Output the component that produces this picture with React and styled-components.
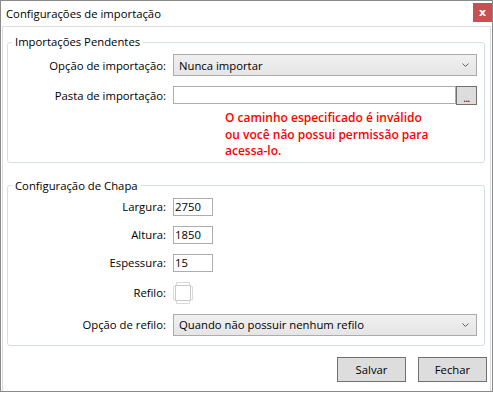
import React from "react";
import styled, { createGlobalStyle } from "styled-components";

const GlobalStyle = createGlobalStyle`
  html, body { margin: 0; padding: 0; background: #fff; }
  body {
    font-family: "Open Sans", "Noto Sans", "Liberation Sans", sans-serif;
    font-size: 11.3px;
    color: #000;
  }
  * { box-sizing: border-box; }
`;

const Window = styled.div`
  width: 493px;
  height: 392px;
  border: 1px solid #8a8a8a;
  display: flex;
  flex-direction: column;
  background: #fff;
`;

const TitleBar = styled.div`
  height: 25px;
  display: flex;
  align-items: flex-start;
  padding-left: 5px;
`;

const Title = styled.span`
  line-height: 25px;
`;

const CloseButton = styled.div`
  margin-left: auto;
  margin-top: 2px;
  width: 19px;
  height: 19px;
  background: #c75050;
  color: #fff;
  font-weight: bold;
  font-size: 11px;
  font-family: "DejaVu Sans", sans-serif;
  display: flex;
  align-items: center;
  justify-content: center;
  line-height: 1;
`;

const Body = styled.div`
  flex: 1;
  margin: 0 1px;
  border: 1px solid #dcdcdc;
  border-bottom: none;
  display: flex;
  flex-direction: column;
  padding: 7px 5px 0 4px;
`;

const Group = styled.fieldset`
  margin: ${(p) => (p.$first ? "0" : "15px 0 0 0")};
  padding: 0 7px ${(p) => p.$pb}px 0;
  border: 1px solid #d5dfe5;
  border-radius: 3px;
  min-width: 0;
`;

const Legend = styled.legend`
  margin-left: 4px;
  padding: 0 3px;
  line-height: 16px;
`;

const Form = styled.div`
  margin-top: 4px;
  display: grid;
  grid-template-columns: 158px 1fr;
  column-gap: 7px;
  row-gap: 10px;
  align-items: center;
`;

const Label = styled.div`
  text-align: right;
  white-space: nowrap;
`;

const Combo = styled.div`
  height: 22px;
  border: 1px solid #acacac;
  background: linear-gradient(#f0f0f0, #e5e5e5);
  display: flex;
  align-items: center;
  padding: 0 7px 0 5px;
  justify-content: space-between;
  white-space: nowrap;
`;

const TextBox = styled.input`
  width: ${(p) => (p.$w ? `${p.$w}px` : "auto")};
  flex: ${(p) => (p.$w ? "none" : "1")};
  min-width: 0;
  height: 18px;
  border: 1px solid #abadb3;
  background: #fff;
  padding: 0 0 0 1px;
  margin: 0;
  font: inherit;
  color: #000;
  outline: none;
`;

const PathRow = styled.div`
  display: flex;
  align-items: flex-start;
`;

const BrowseButton = styled.div`
  width: 21px;
  height: 19px;
  border: 1px solid #707070;
  background: #dddddd;
  display: flex;
  align-items: flex-end;
  justify-content: center;
  font-size: 10px;
  line-height: 12px;
  letter-spacing: -0.5px;
`;

const Control = styled.div`
  display: flex;
`;

const ErrorText = styled.div`
  grid-column: 2;
  margin: -5px 0 0 52px;
  color: #ff0000;
  font-size: 12px;
  font-weight: 600;
  line-height: 16.5px;
  white-space: nowrap;
`;

const ButtonRow = styled.div`
  display: flex;
  justify-content: flex-end;
  gap: 12px;
  margin: 11px -2px 0 0;
`;

const Button = styled.div`
  width: 69px;
  height: 25px;
  border: 1px solid #707070;
  background: #dddddd;
  display: flex;
  align-items: center;
  justify-content: center;
`;

const Chevron = () => (
  <svg width="7" height="4" viewBox="0 0 7 4">
    <path d="M0.5 0.5 L3.5 3.5 L6.5 0.5" fill="none" stroke="#606060" strokeWidth="1" />
  </svg>
);

const CheckBox = () => (
  <svg width="20" height="22" viewBox="0 0 20 22">
    <rect x="2.5" y="3.5" width="15" height="15" fill="#fff" stroke="#c9c9c9" />
    <path d="M3.5 3.5 V0.5 H16.5 V3.5" fill="none" stroke="#d9d9d9" />
    <path d="M3.5 18.5 V21.5 H16.5 V18.5" fill="none" stroke="#d9d9d9" />
    <path d="M2.5 4.5 H0.5 V17.5 H2.5" fill="none" stroke="#d9d9d9" />
    <path d="M17.5 4.5 H19.5 V17.5 H17.5" fill="none" stroke="#d9d9d9" />
  </svg>
);

export default function App() {
  return (
    <>
      <GlobalStyle />
      <Window>
        <TitleBar>
          <Title>Configurações de importação</Title>
          <CloseButton>x</CloseButton>
        </TitleBar>
        <Body>
          <Group $first $pb={2}>
            <Legend>Importações Pendentes</Legend>
            <Form>
              <Label>Opção de importação:</Label>
              <Combo>
                <span>Nunca importar</span>
                <Chevron />
              </Combo>
              <Label>Pasta de importação:</Label>
              <PathRow>
                <TextBox readOnly defaultValue="" />
                <BrowseButton>...</BrowseButton>
              </PathRow>
              <ErrorText>
                O caminho especificado é inválido
                <br />
                ou você não possui permissão para
                <br />
                acessa-lo.
              </ErrorText>
            </Form>
          </Group>
          <Group $pb={9}>
            <Legend>Configuração de Chapa</Legend>
            <Form>
              <Label>Largura:</Label>
              <Control>
                <TextBox $w={40} readOnly defaultValue="2750" />
              </Control>
              <Label>Altura:</Label>
              <Control>
                <TextBox $w={40} readOnly defaultValue="1850" />
              </Control>
              <Label>Espessura:</Label>
              <Control>
                <TextBox $w={40} readOnly defaultValue="15" />
              </Control>
              <Label>Refilo:</Label>
              <Control>
                <CheckBox />
              </Control>
              <Label>Opção de refilo:</Label>
              <Combo>
                <span>Quando não possuir nenhum refilo</span>
                <Chevron />
              </Combo>
            </Form>
          </Group>
          <ButtonRow>
            <Button>Salvar</Button>
            <Button>Fechar</Button>
          </ButtonRow>
        </Body>
      </Window>
    </>
  );
}
